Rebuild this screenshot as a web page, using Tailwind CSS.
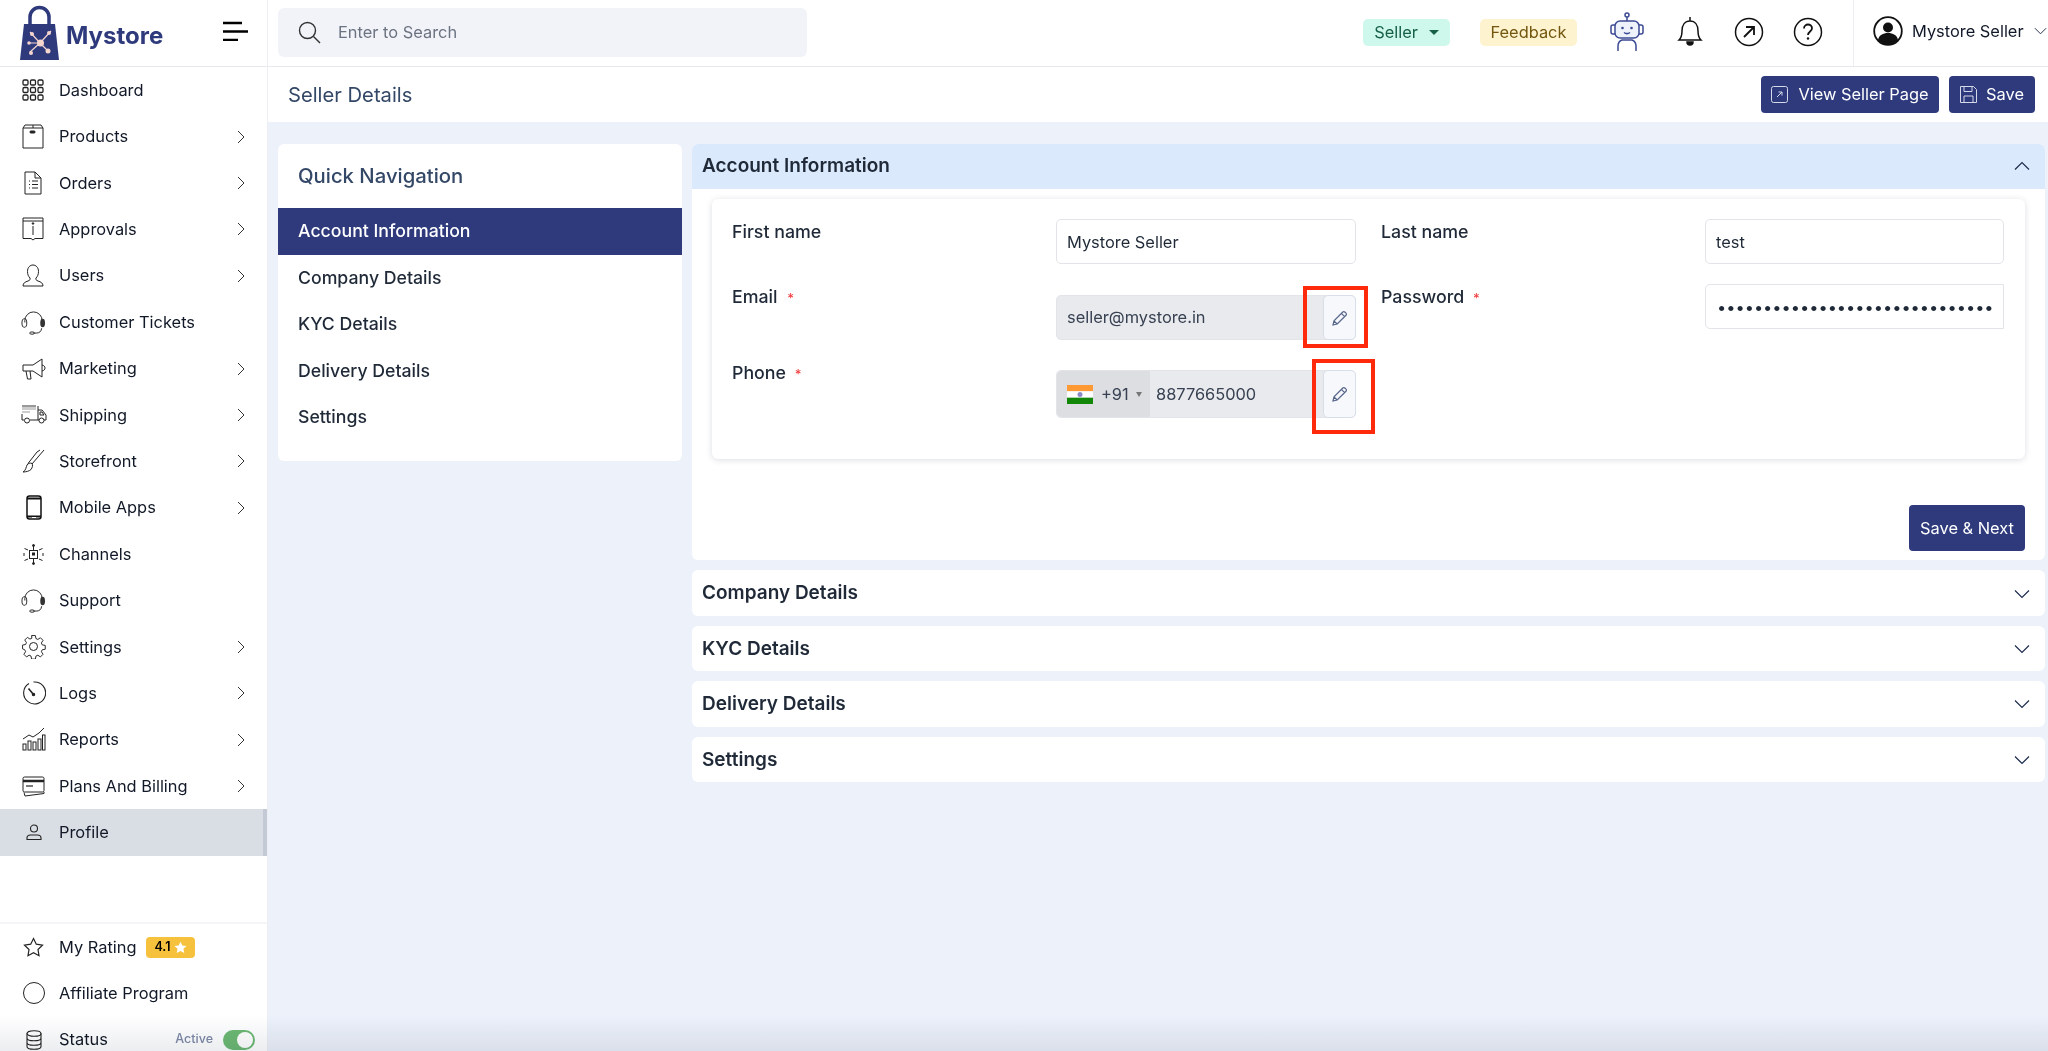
<!DOCTYPE html>
<html lang="en">
<head>
    <meta charset="UTF-8">
    <title>Seller Details</title>
    <script src="https://cdn.jsdelivr.net/npm/@tailwindcss/browser@4"></script>
</head>
<body class="relative flex h-screen overflow-hidden bg-[#ecf1fa] font-['Inter',sans-serif] text-[16.4px] text-[#111827]">
    <svg class="hidden">
        <symbol id="chev" viewBox="0 0 8 14"><path d="M1 1l6 6-6 6" fill="none" stroke="#333" stroke-width="1"/></symbol>
        <symbol id="down" viewBox="0 0 16 10"><path d="M1 1.500l7 7 7-7" fill="none" stroke="#1f2d4d" stroke-width="1.200"/></symbol>
        <symbol id="pen" viewBox="0 0 16 16"><path d="M1 15l1-4.200 8.800-8.800a1.400 1.400 0 0 1 2 0l1.200 1.200a1.400 1.400 0 0 1 0 2L5.200 14zM9.400 3.400l3.200 3.200M2 10.800L5.200 14" fill="none" stroke="#56658a" stroke-width="1.200"/></symbol>
        <symbol id="headset" viewBox="0 0 26 26"><path d="M4 13V11a9 9 0 0 1 18 0v2M13 24h3c3 0 5-1.500 5.500-5" fill="none" stroke="#222" stroke-width="1"/><ellipse cx="3.500" cy="13.500" rx="2.500" ry="4.500" fill="none" stroke="#222"/><ellipse cx="22.500" cy="13.500" rx="2.500" ry="4.500" fill="#333"/><ellipse cx="11.500" cy="24" rx="2.500" ry="1.200" fill="none" stroke="#222"/></symbol>
    </svg>

    <!-- Sidebar -->
    <aside class="flex h-full w-[268px] shrink-0 flex-col border-r border-[#eceef2] bg-white">
        <div class="flex h-[67px] shrink-0 items-center border-b border-[#e8e9ec] pl-[20px]">
            <svg width="39" height="57" viewBox="0 0 39 57" class="mb-[2px] shrink-0">
                <path d="M10 20v-7a9.500 9.500 0 0 1 19 0v7" fill="none" stroke="#2e3a7c" stroke-width="3.500"/>
                <path d="M4 20h31l4 36H0z" fill="#2e3a7c"/>
                <g stroke="#f5d6cf" stroke-width="1.200"><path d="M20 39l11-12M20 39l-10-11M20 39H9M20 39l-10 9M20 39l8 8"/></g>
                <g fill="#f5d6cf"><circle cx="20.500" cy="39" r="3.500"/><circle cx="29" cy="29" r="2"/><circle cx="12" cy="30" r="2"/><circle cx="9" cy="39" r="1.800"/><circle cx="11" cy="49" r="2"/><circle cx="28" cy="47" r="2.500"/></g>
            </svg>
            <span class="ml-[7px] mt-[6px] w-[98px] text-[24px] font-bold text-[#2e3a7c]">Mystore</span>
            <svg width="26" height="20" viewBox="0 0 26 20" class="mb-[4px] ml-[58px]"><path d="M1 2h19M1 10.500h25M1 19h15" stroke="#000" stroke-width="2.500"/></svg>
        </div>

        <nav class="flex flex-1 flex-col">
            <a class="flex h-[46.4px] shrink-0 items-center pl-[22px]">
                <svg width="22" height="22" viewBox="0 0 22 22" fill="none" stroke="#222" stroke-width="1.300"><rect x="1" y="1" width="5" height="5" rx="1.300"/><rect x="8.500" y="1" width="5" height="5" rx="1.300"/><rect x="16" y="1" width="5" height="5" rx="1.300"/><rect x="1" y="8.500" width="5" height="5" rx="1.300"/><rect x="8.500" y="8.500" width="5" height="5" rx="1.300"/><rect x="16" y="8.500" width="5" height="5" rx="1.300"/><rect x="1" y="16" width="5" height="5" rx="1.300"/><rect x="8.500" y="16" width="5" height="5" rx="1.300"/><rect x="16" y="16" width="5" height="5" rx="1.300"/></svg>
                <span class="ml-[15px]">Dashboard</span>
            </a>
            <a class="flex h-[46.4px] shrink-0 items-center pl-[22px]">
                <svg width="22" height="25" viewBox="0 0 22 25" fill="none" stroke="#222"><path d="M1 4l2-3h16l2 3v20H1zM1 4h20M11 1v3"/><rect x="8" y="7" width="5" height="2" rx=".8" fill="#222"/></svg>
                <span class="ml-[15px]">Products</span>
                <svg class="ml-auto mr-[22px] h-[14px] w-[8px]"><use href="#chev"/></svg>
            </a>
            <a class="flex h-[46.4px] shrink-0 items-center pl-[22px]">
                <svg width="22" height="24" viewBox="0 0 22 24" fill="none" stroke="#222"><path d="M3 1h10l6 6v16H3zM13 1v6h6M7 10h1M10 10h6M7 13.500h1M10 13.500h6M7 17h1M10 17h6"/></svg>
                <span class="ml-[15px]">Orders</span>
                <svg class="ml-auto mr-[22px] h-[14px] w-[8px]"><use href="#chev"/></svg>
            </a>
            <a class="flex h-[46.4px] shrink-0 items-center pl-[22px]">
                <svg width="22" height="24" viewBox="0 0 22 24" fill="none" stroke="#222"><path d="M1 1h20v20.500h-8l-2 1.500-2-1.500H1zM1 4h20M11 9v9" /><circle cx="11" cy="6.500" r=".8" fill="#222"/></svg>
                <span class="ml-[15px]">Approvals</span>
                <svg class="ml-auto mr-[22px] h-[14px] w-[8px]"><use href="#chev"/></svg>
            </a>
            <a class="flex h-[46.4px] shrink-0 items-center pl-[22px]">
                <svg width="22" height="23" viewBox="0 0 22 23" fill="none" stroke="#222"><path d="M1 22c0-3 2-4 5-5 2-.8 2.500-1.500 2-3-1.500-1.500-2.500-3.500-2.500-6.500C5.500 3.500 8 1 11 1s5.500 2.500 5.500 6.500c0 3-1 5-2.500 6.500-.5 1.500 0 2.200 2 3 3 1 5 2 5 5z"/></svg>
                <span class="ml-[15px]">Users</span>
                <svg class="ml-auto mr-[22px] h-[14px] w-[8px]"><use href="#chev"/></svg>
            </a>
            <a class="flex h-[46.4px] shrink-0 items-center pl-[21px]">
                <svg width="25" height="25"><use href="#headset"/></svg>
                <span class="ml-[13px]">Customer Tickets</span>
            </a>
            <a class="flex h-[46.4px] shrink-0 items-center pl-[22px]">
                <svg width="24" height="24" viewBox="0 0 24 24" fill="none" stroke="#222"><path d="M1 8h10l9-6v18l-9-6H1zM4 14l1.500 8H9l-1-8M20 8c2 .5 3 1.500 3 3s-1 2.500-3 3"/></svg>
                <span class="ml-[13px]">Marketing</span>
                <svg class="ml-auto mr-[22px] h-[14px] w-[8px]"><use href="#chev"/></svg>
            </a>
            <a class="flex h-[46.4px] shrink-0 items-center pl-[21px]">
                <svg width="26" height="19" viewBox="0 0 26 19" fill="none" stroke="#222"><path d="M1 1h14" stroke="#999" stroke-width="3"/><path d="M1 4h14M1 7h8" stroke="#999"/><path d="M1 9v6h2M9 15h8V1M17 5h4l4 5v5h-2M17 15h1"/><circle cx="6" cy="15.500" r="2.500"/><circle cx="20.500" cy="15.500" r="2.500"/><path d="M19 7h2l2 3h-4z"/></svg>
                <span class="ml-[12px]">Shipping</span>
                <svg class="ml-auto mr-[22px] h-[14px] w-[8px]"><use href="#chev"/></svg>
            </a>
            <a class="flex h-[46.4px] shrink-0 items-center pl-[22px]">
                <svg width="24" height="24" viewBox="0 0 24 24" fill="none" stroke="#222"><path d="M1 23c3-1.500 3-5 4-7 1-1.500 3-2.500 5-1.500 1 1.500.5 4-1 6-1.500 1.500-5 2.500-8 2.500zM6 14.500L15 3M10 15L22 1M15 3l3-2"/></svg>
                <span class="ml-[13px]">Storefront</span>
                <svg class="ml-auto mr-[22px] h-[14px] w-[8px]"><use href="#chev"/></svg>
            </a>
            <a class="flex h-[46.4px] shrink-0 items-center pl-[26px]">
                <svg width="16" height="25" viewBox="0 0 16 25" fill="none" stroke="#111"><rect x="1" y="1" width="14" height="23" rx="2.500" stroke-width="1.500"/><path d="M1 3.500h14M1 21.500h14" stroke-width="2"/><path d="M6 22.500h4" stroke="#fff"/></svg>
                <span class="ml-[17px]">Mobile Apps</span>
                <svg class="ml-auto mr-[22px] h-[14px] w-[8px]"><use href="#chev"/></svg>
            </a>
            <a class="flex h-[46.4px] shrink-0 items-center pl-[23px]">
                <svg width="21" height="21" viewBox="0 0 21 21" fill="none" stroke="#222"><rect x="6.500" y="6.500" width="8" height="8"/><rect x="9.500" y="9" width="2" height="2" fill="#222"/><path d="M10.500 1v5.500M10.500 14.500V20M1.500 4.500l3.500 1.500M1.500 16.500l3.500-1.500M19.500 4.500L16 6M19.500 16.500L16 15M1 9v3M20 9v3"/><circle cx="10.500" cy="1.500" r="1" fill="#222"/><circle cx="10.500" cy="19.500" r="1" fill="#222"/></svg>
                <span class="ml-[15px]">Channels</span>
            </a>
            <a class="flex h-[46.4px] shrink-0 items-center pl-[21px]">
                <svg width="25" height="25"><use href="#headset"/></svg>
                <span class="ml-[13px]">Support</span>
            </a>
            <a class="flex h-[46.4px] shrink-0 items-center pl-[21px]">
                <svg width="25" height="25" viewBox="0 0 25 25" fill="none" stroke="#222"><circle cx="12.500" cy="12.500" r="4"/><path d="M10.500 1h4l.6 3.200 2 .9 2.700-1.800 2.800 2.800-1.800 2.700.9 2 3.200.6v4l-3.200.6-.9 2 1.800 2.700-2.800 2.800-2.700-1.800-2 .9-.6 3.200h-4l-.6-3.200-2-.9-2.700 1.800-2.800-2.800 1.800-2.700-.9-2L1 15v-4l3.200-.6.900-2-1.800-2.700 2.800-2.800 2.700 1.800 2-.9z" transform="translate(.6 .6) scale(.95)"/></svg>
                <span class="ml-[13px]">Settings</span>
                <svg class="ml-auto mr-[22px] h-[14px] w-[8px]"><use href="#chev"/></svg>
            </a>
            <a class="flex h-[46.4px] shrink-0 items-center pl-[21px]">
                <svg width="25" height="25" viewBox="0 0 25 25" fill="none" stroke="#222" stroke-width="1.100"><path d="M8 2.500a11 11 0 1 0 4.500-1.500M12 1.500"/><path d="M7.500 7.500l5 6" stroke-width="1.600"/><circle cx="12.500" cy="13.500" r="1.200" fill="#222"/></svg>
                <span class="ml-[13px]">Logs</span>
                <svg class="ml-auto mr-[22px] h-[14px] w-[8px]"><use href="#chev"/></svg>
            </a>
            <a class="flex h-[46.4px] shrink-0 items-center pl-[22px]">
                <svg width="24" height="25" viewBox="0 0 24 25" fill="none" stroke="#222"><path d="M1 12l6-4 4 2 6-4 5-5"/><rect x="1" y="17" width="3" height="6"/><rect x="6" y="14" width="3" height="9"/><rect x="11" y="15" width="3" height="8"/><rect x="16" y="12" width="3" height="11"/><rect x="20.500" y="8" width="2.500" height="15"/></svg>
                <span class="ml-[13px]">Reports</span>
                <svg class="ml-auto mr-[22px] h-[14px] w-[8px]"><use href="#chev"/></svg>
            </a>
            <a class="flex h-[46.4px] shrink-0 items-center pl-[22px]">
                <svg width="23" height="21" viewBox="0 0 23 21" fill="none" stroke="#222"><rect x="1" y="1" width="21" height="15" rx="1.500"/><path d="M1 5h21" stroke-width="2.500"/><path d="M4 10h7" stroke-width="1.200"/><path d="M2 16.500l1 3.500 19-2.500v-1.500"/></svg>
                <span class="ml-[14px]">Plans And Billing</span>
                <svg class="ml-auto mr-[22px] h-[14px] w-[8px]"><use href="#chev"/></svg>
            </a>
            <a class="flex h-[46.4px] shrink-0 items-center border-r-[4px] border-[#c4c9d6] bg-[#d9dde4] pl-[26px]">
                <svg width="16" height="16" viewBox="0 0 16 16" fill="none" stroke="#222" stroke-width="1.100"><circle cx="8" cy="4.500" r="3.500"/><path d="M1 15.500v-1.500c0-2 1.500-3 3.500-3h7c2 0 3.500 1 3.500 3v1.500z"/></svg>
                <span class="ml-[17px]">Profile</span>
            </a>
        </nav>

        <div class="h-[129px] shrink-0 border-t-2 border-[#f4f5f7]">
            <a class="flex h-[46.3px] items-center pl-[23px]">
                <svg width="21" height="20" viewBox="0 0 21 20" fill="none" stroke="#222" stroke-width="1.200"><path d="M10.500 1.500l2.800 5.700 6.200.9-4.500 4.400 1 6.200-5.500-2.900L5 18.700l1-6.200L1.500 8.100l6.200-.9z"/></svg>
                <span class="ml-[15px]">My Rating</span>
                <span class="ml-[10px] flex h-[21px] w-[49px] items-center justify-center gap-[4px] rounded-[4px] bg-[#f6c23e] text-[12.500px] font-semibold text-black">4.1
                    <svg width="13" height="13" viewBox="0 0 20 20" fill="#fff"><path d="M10 1l2.800 5.900 6.500.8-4.800 4.400 1.300 6.400L10 15.300l-5.800 3.200 1.300-6.400L.7 7.700l6.500-.8z"/></svg>
                </span>
            </a>
            <a class="flex h-[46.3px] items-center pl-[23px]">
                <span class="h-[22px] w-[22px] rounded-full border border-[#222]"></span>
                <span class="ml-[14px]">Affiliate Program</span>
            </a>
            <a class="flex h-[46.3px] items-center pl-[26px]">
                <svg width="16" height="20" viewBox="0 0 16 20" fill="none" stroke="#222" stroke-width="1.100"><ellipse cx="8" cy="3.500" rx="7" ry="2.800"/><path d="M1 3.500v13c0 1.500 3 2.800 7 2.800s7-1.300 7-2.800v-13M1 8c0 1.500 3 2.800 7 2.800s7-1.300 7-2.800M1 12.500c0 1.500 3 2.800 7 2.800s7-1.300 7-2.800"/></svg>
                <span class="ml-[17px]">Status</span>
                <span class="ml-auto text-[12.500px] font-medium text-[#7d89a8]">Active</span>
                <span class="ml-[10px] mr-[12px] flex h-[20px] w-[32px] items-center justify-end rounded-full bg-[#6cb974] pr-[2px]"><span class="h-[16px] w-[16px] rounded-full bg-white"></span></span>
            </a>
        </div>
    </aside>

    <div class="flex h-full min-w-0 flex-1 flex-col">
        <!-- Top bar -->
        <header class="flex h-[67px] shrink-0 items-center border-b border-[#e8e9ec] bg-white pb-[2px] pl-[10px]">
            <div class="flex h-[49px] w-[529px] items-center rounded-[6px] bg-[#f1f3f8] pl-[20px] text-[#6b7280]">
                <svg width="23" height="23" viewBox="0 0 23 23" fill="none" stroke="#333" stroke-width="1.400"><circle cx="9.500" cy="9.500" r="8"/><path d="M15.500 15.500l6.500 6.500"/></svg>
                <span class="ml-[17px]">Enter to Search</span>
            </div>
            <div class="ml-[556px] flex h-[27px] w-[87px] items-center justify-center gap-[11px] rounded-[5px] bg-[#cff8ec] text-[#166046]">Seller
                <span class="h-0 w-0 border-x-[5px] border-t-[5px] border-x-transparent border-t-[#166046]"></span>
            </div>
            <div class="ml-[30px] flex h-[27px] w-[97px] items-center justify-center rounded-[5px] bg-[#fdf3cf] text-[#73560f]">Feedback</div>
            <svg width="34" height="40" viewBox="0 0 34 40" fill="none" stroke="#3b4a94" stroke-width="1.500" class="ml-[33px]">
                <circle cx="17" cy="3" r="2"/><path d="M17 5v4"/><rect x="5" y="9" width="24" height="17" rx="5" fill="#eef2fb"/><path d="M5 13H3a2 2 0 0 0-2 2v5a2 2 0 0 0 2 2h2M29 13h2a2 2 0 0 1 2 2v5a2 2 0 0 1-2 2h-2"/>
                <circle cx="12.500" cy="16" r="1.300" fill="#3b4a94" stroke="none"/><circle cx="21.500" cy="16" r="1.300" fill="#3b4a94" stroke="none"/><path d="M14 20.500c2 1.500 4 1.500 6 0"/><path d="M8 39v-5c0-3 1.500-5 4-6h10c2.500 1 4 3 4 6v5"/>
            </svg>
            <svg width="26" height="30" viewBox="0 0 26 30" fill="none" stroke="#111" stroke-width="1.500" class="mb-[3px] ml-[33px]"><path d="M2 24c2-2 3-4 3-9 0-6 3-10 8-10s8 4 8 10c0 5 1 7 3 9zM13 1v4"/><path d="M10 26a3 3 0 0 0 6 0z" fill="#111"/></svg>
            <svg width="30" height="30" viewBox="0 0 30 30" fill="none" stroke="#111" stroke-width="1.500" class="ml-[31px]"><circle cx="15" cy="15" r="13.500"/><path d="M10 20L20 10M12 10h8v8" stroke-width="1.800"/></svg>
            <svg width="30" height="30" viewBox="0 0 30 30" fill="none" stroke="#111" stroke-width="1.500" class="ml-[29px]"><circle cx="15" cy="15" r="13.500"/><path d="M11 11.500c0-2.500 2-4 4-4s4 1.500 4 3.800c0 3.200-4 3.200-4 6.700" stroke-width="1.800"/><circle cx="15" cy="21.500" r="1.200" fill="#111" stroke="none"/></svg>
            <div class="ml-[30px] flex h-[67px] items-center border-l border-[#eceef2] pb-[2px] pl-[19px]">
                <svg width="30" height="30" viewBox="0 0 30 30"><circle cx="15" cy="15" r="13.800" fill="#fff" stroke="#111" stroke-width="1.800"/><circle cx="15" cy="11.500" r="5" fill="#111"/><path d="M5 24c1-5 5-7 10-7s9 2 10 7c-2.500 3-6 4.500-10 4.500S7.500 27 5 24z" fill="#111"/></svg>
                <span class="ml-[9px] whitespace-nowrap">Mystore Seller</span>
                <svg class="ml-[10px] h-[8px] w-[13px]"><use href="#down"/></svg>
            </div>
        </header>

        <!-- Page title -->
        <div class="flex h-[55px] shrink-0 items-center bg-white pl-[20px] pr-[13px]">
            <h1 class="pt-[2px] text-[20.2px] text-[#334766]">Seller Details</h1>
            <button class="ml-auto flex h-[37px] w-[178px] items-center justify-center gap-[10px] rounded-[4px] bg-[#2e3a7c] text-white">
                <svg width="17" height="17" viewBox="0 0 17 17" fill="none" stroke="#d5d9ea"><rect x=".5" y=".5" width="16" height="16" rx="2"/><path d="M6 11l5-5M7.500 6H11v3.500"/></svg>
                View Seller Page
            </button>
            <button class="ml-[10px] flex h-[37px] w-[86px] items-center justify-center gap-[9px] rounded-[4px] bg-[#2e3a7c] text-white">
                <svg width="17" height="17" viewBox="0 0 17 17" fill="none" stroke="#d5d9ea"><path d="M.5.500h13l3 3v13H.5zM4 .5v5h8v-5M4 16.500V10h9v6.500"/></svg>
                Save
            </button>
        </div>

        <main class="flex min-h-0 flex-1 items-start gap-[10px] pl-[10px] pr-[3px] pt-[22px]">
            <!-- Quick navigation -->
            <section class="h-[317px] w-[404px] shrink-0 rounded-[6px] bg-white">
                <h2 class="flex h-[64px] items-center pl-[20px] text-[20.3px] font-medium text-[#334766]">Quick Navigation</h2>
                <a class="flex h-[47px] items-center bg-[#2e3a7c] pl-[20px] text-[17.7px] font-medium text-white">Account Information</a>
                <a class="flex h-[46.500px] items-center pl-[20px] text-[17.7px] font-medium text-[#1f2937]">Company Details</a>
                <a class="flex h-[46.500px] items-center pl-[20px] text-[17.7px] font-medium text-[#1f2937]">KYC Details</a>
                <a class="flex h-[46.500px] items-center pl-[20px] text-[17.7px] font-medium text-[#1f2937]">Delivery Details</a>
                <a class="flex h-[46.500px] items-center pl-[20px] text-[17.7px] font-medium text-[#1f2937]">Settings</a>
            </section>

            <!-- Accordion -->
            <div class="min-w-0 flex-1">
                <section class="h-[416px] rounded-[6px] bg-white">
                    <div class="flex h-[45px] items-center justify-between rounded-t-[6px] bg-[#dbe9fc] pb-[1px] pl-[10px] pr-[15px]">
                        <h3 class="text-[19px] font-semibold text-[#1f2937]">Account Information</h3>
                        <svg class="h-[10px] w-[16px] rotate-180"><use href="#down"/></svg>
                    </div>
                    <div class="mx-[20px] mt-[10px] h-[260px] rounded-[6px] px-[20px] pt-[20px] shadow-[0_1px_6px_rgba(60,70,100,0.18)]">
                        <div class="flex h-[45px] items-start">
                            <label class="w-[324px] text-[17.8px] font-medium text-[#1f2937]">First name</label>
                            <div class="flex h-[45px] w-[300px] items-center rounded-[5px] border border-[#e2e4e9] pl-[10px] pt-[1px] text-[#1f2937]">Mystore Seller</div>
                            <label class="ml-[25px] w-[324px] text-[17.8px] font-medium text-[#1f2937]">Last name</label>
                            <div class="flex h-[45px] w-[299px] items-center rounded-[5px] border border-[#e2e4e9] pl-[10px] pt-[1px] text-[#1f2937]">test</div>
                        </div>
                        <div class="mt-[20px] flex h-[56px] items-start">
                            <label class="w-[324px] text-[17.8px] font-medium text-[#1f2937]">Email <span class="ml-[5px] text-[13px] text-[#ef4444]">*</span></label>
                            <div class="relative mt-[11px] flex h-[45px] w-[300px] items-center rounded-[5px] border border-[#e2e4e9] bg-[#e9eaee] pl-[10px] text-[#374151]">seller@mystore.in
                                <button class="absolute -right-px -top-px flex h-[45px] w-[33px] items-center justify-center rounded-[5px] border border-[#d9dfea] bg-[#f7f8fc]"><svg width="16" height="16"><use href="#pen"/></svg></button>
                                <span class="absolute -top-[10px] right-[-13px] h-[62px] w-[65px] border-[4px] border-[#ff2a0c]"></span>
                            </div>
                            <label class="ml-[25px] w-[324px] text-[17.8px] font-medium text-[#1f2937]">Password <span class="ml-[4px] text-[13px] text-[#ef4444]">*</span></label>
                            <input type="password" value="mystoreseller-password-value12" class="h-[45px] w-[299px] rounded-l-[5px] border border-[#e2e4e9] pl-[11px] text-[#1f2937] outline-none">
                        </div>
                        <div class="mt-[20px] flex items-start">
                            <label class="w-[324px] text-[17.8px] font-medium text-[#1f2937]">Phone <span class="ml-[4px] text-[13px] text-[#ef4444]">*</span></label>
                            <div class="relative mt-[10px] flex h-[48px] w-[300px] items-center rounded-[5px] border border-[#e2e4e9] bg-[#e9eaee] text-[#374151]">
                                <div class="flex h-full w-[93px] items-center rounded-l-[5px] bg-[#dcdee2] pl-[10px]">
                                    <svg width="26" height="19" viewBox="0 0 26 19"><rect width="26" height="6.300" fill="#ff9933"/><rect y="6.300" width="26" height="6.400" fill="#fff"/><rect y="12.700" width="26" height="6.300" fill="#138808"/><circle cx="13" cy="9.500" r="2.500" fill="#8b8bc9"/></svg>
                                    <span class="ml-[8px]">+91</span>
                                    <span class="ml-[7px] h-0 w-0 border-x-[3.500px] border-t-[5px] border-x-transparent border-t-[#777]"></span>
                                </div>
                                <span class="ml-[6px]">8877665000</span>
                                <button class="absolute -right-px -top-px flex h-[48px] w-[33px] items-center justify-center rounded-[5px] border border-[#d9dfea] bg-[#f7f8fc]"><svg width="16" height="16"><use href="#pen"/></svg></button>
                                <span class="absolute -top-[12px] right-[-20px] h-[75px] w-[63px] border-[4px] border-[#ff2a0c]"></span>
                            </div>
                        </div>
                    </div>
                    <div class="mr-[20px] mt-[46px] flex justify-end">
                        <button class="h-[46px] w-[116px] rounded-[4px] bg-[#2e3a7c] text-white">Save &amp; Next</button>
                    </div>
                </section>
                <div class="mt-[10px] flex h-[46px] items-center justify-between rounded-[6px] bg-white pl-[10px] pr-[15px] pt-[1px]">
                    <h3 class="text-[19px] font-semibold text-[#1f2937]">Company Details</h3>
                    <svg class="h-[10px] w-[16px]"><use href="#down"/></svg>
                </div>
                <div class="mt-[10px] flex h-[45px] items-center justify-between rounded-[6px] bg-white pl-[10px] pr-[15px] pt-[1px]">
                    <h3 class="text-[19px] font-semibold text-[#1f2937]">KYC Details</h3>
                    <svg class="h-[10px] w-[16px]"><use href="#down"/></svg>
                </div>
                <div class="mt-[10px] flex h-[46px] items-center justify-between rounded-[6px] bg-white pl-[10px] pr-[15px]">
                    <h3 class="text-[19px] font-semibold text-[#1f2937]">Delivery Details</h3>
                    <svg class="h-[10px] w-[16px]"><use href="#down"/></svg>
                </div>
                <div class="mt-[10px] flex h-[45px] items-center justify-between rounded-[6px] bg-white pl-[10px] pr-[15px] pt-[1px]">
                    <h3 class="text-[19px] font-semibold text-[#1f2937]">Settings</h3>
                    <svg class="h-[10px] w-[16px]"><use href="#down"/></svg>
                </div>
            </div>
        </main>
    </div>

    <!-- Fade along the bottom edge -->
    <div class="pointer-events-none absolute inset-x-0 bottom-0 h-[36px] bg-gradient-to-b from-white to-[#ecedf0] mix-blend-multiply"></div>
</body>
</html>
